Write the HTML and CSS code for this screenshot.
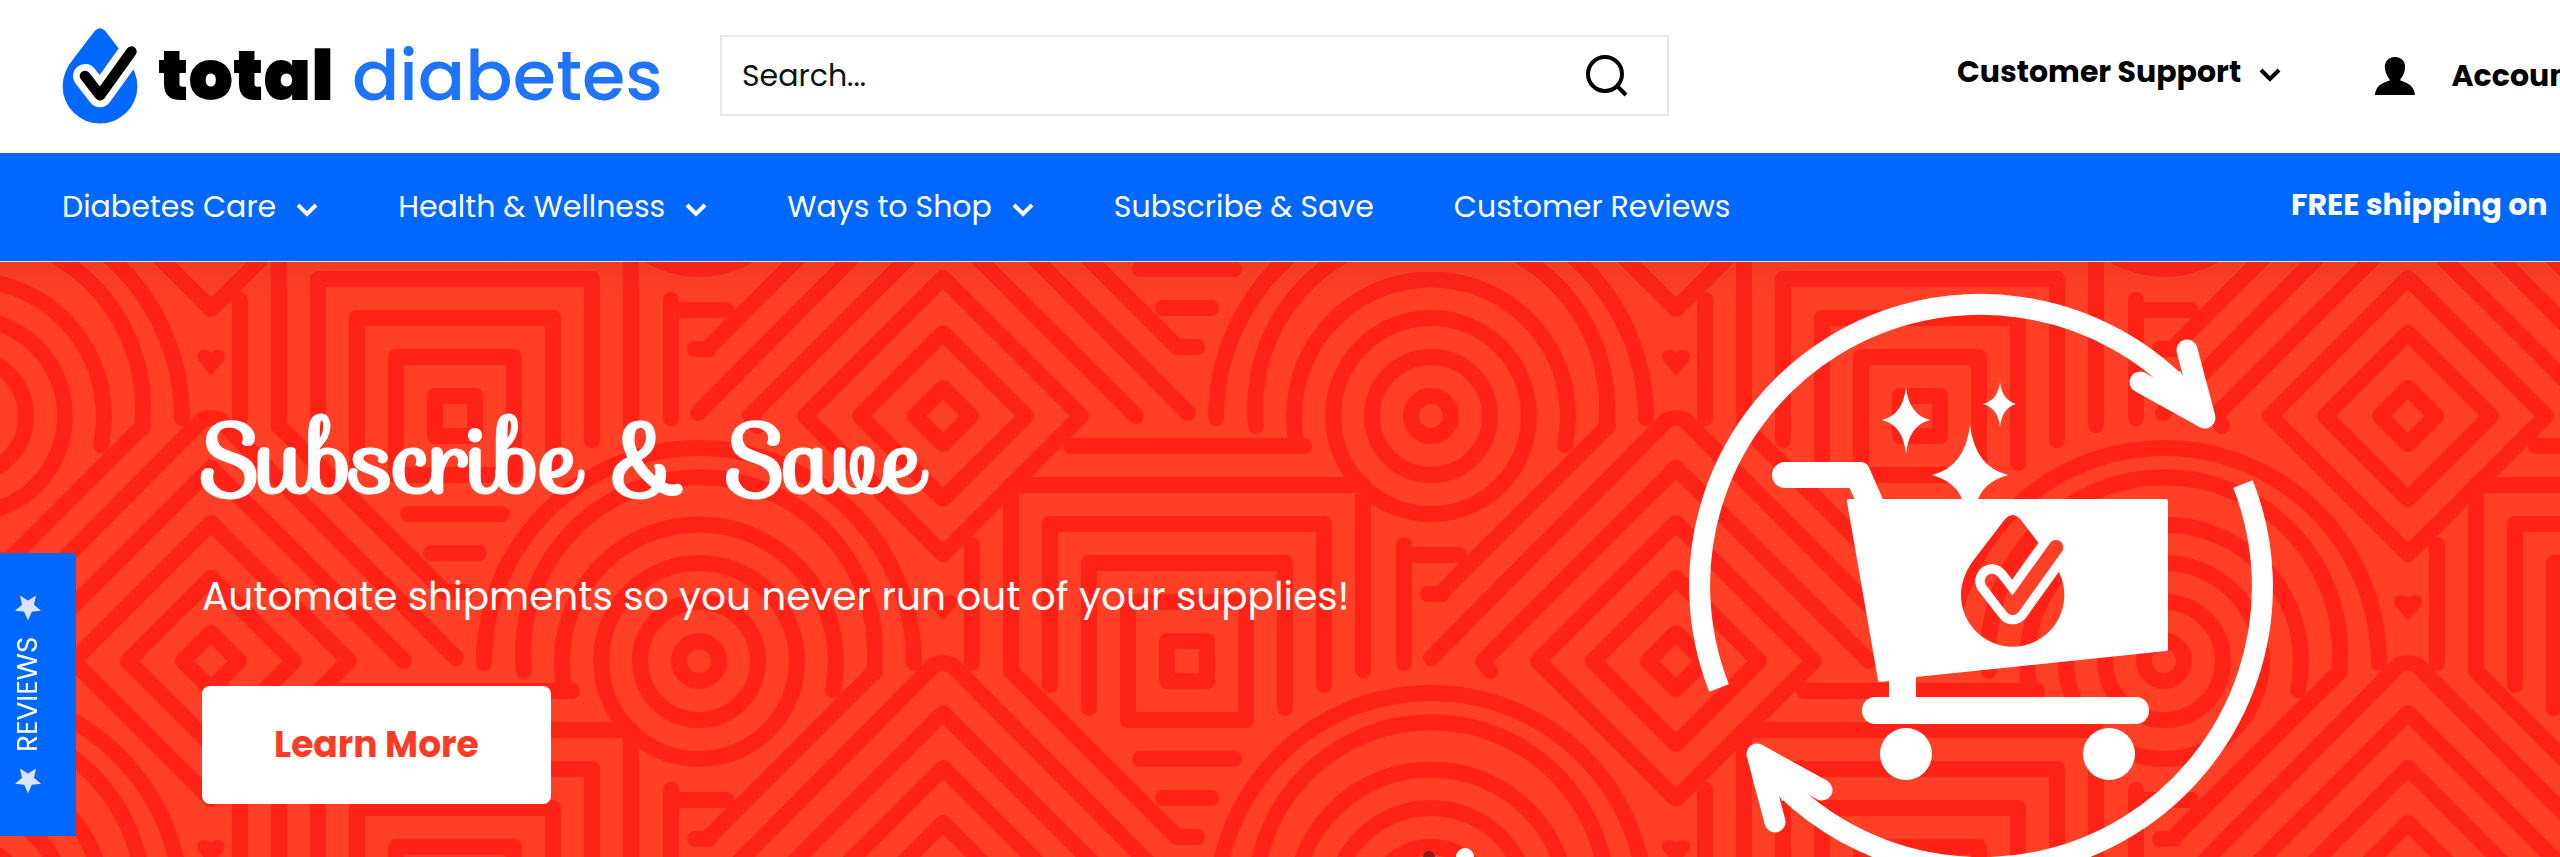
FILE: index.html
```html
<!DOCTYPE html>
<html lang="en">
  <head>
    <meta charset="utf-8">
    <title>Total Diabetes</title>
    <link rel="stylesheet" href="styles.css">
  </head>
  <body>
    <svg class="defs" aria-hidden="true">
      <defs>
        <path id="drop" d="M316 116Q338 94 360 116L444 226Q493 285 493 345A155 155 0 0 1 183 345Q183 285 232 226Z"/>
        <path id="check" d="M276 303L338 383L468 202"/>
        <path id="chevron" d="M2 3L11 12L20 3"/>
        <path id="star" d="M12 0L15.500 8L24 9L17.500 14.500L19.500 23L12 18.500L4.500 23L6.500 14.500L0 9L8.500 8Z"/>
        <!-- diamond, square and circle: one strip of the banner pattern -->
        <g id="strip">
          <path d="M0-28L28 0 0 28-28 0ZM0-83L83 0 0 83-83 0ZM0-138L138 0 0 138-138 0Z"/>
          <path d="M-186 10L-193 0 0-193 193 0M-245-3L-9-241Q0-245 9-241L245-3M-234-69L-68-235M68-235L234-69"/>
          <path d="M-272-116V2M-272-106H-217M-248-67H-234"/>
          <path class="heart" d="M0 203L-12 189Q-15 181-7 180-2 180 0 184 2 180 7 180 15 181 12 189Z"/>
          <g transform="translate(244 -245)">
            <path d="M-20-20H20V20H-20ZM-59-59H59V59H-59ZM-98 47V-98H98V47M-137 24V-137H137V24M-176 10V-176H176V9"/>
            <path d="M-116-215H117M-215-116V2M-47 98H47M-24 137H24M-10 176H10"/>
          </g>
          <g transform="translate(488 0)">
            <circle r="20"/>
            <circle r="59"/>
            <circle r="98"/>
            <path d="M-134 29A137 137 0 1 1 134 29M-175 10A176 176 0 1 1 175 12M-215 2A215 215 0 1 1 215 2"/>
          </g>
        </g>
      </defs>
    </svg>

    <header class="header">
      <a class="logo" href="#">
        <svg class="logo-mark" viewBox="181 104 314 398" aria-hidden="true">
          <use href="#drop" fill="#0068ff"/>
          <use href="#check" class="check-gap"/>
          <use href="#check" class="check-line"/>
        </svg>
        <span class="logo-text"><b>total</b> diabetes</span>
      </a>
      <form class="search">
        <input type="text" placeholder="Search..." aria-label="Search">
        <button type="submit" aria-label="Search">
          <svg viewBox="0 0 44 44" aria-hidden="true"><circle cx="20" cy="20" r="17"/><path d="M32 32L41 41"/></svg>
        </button>
      </form>
      <div class="header-links">
        <a class="support" href="#">Customer Support <svg class="chevron" viewBox="0 0 22 16" aria-hidden="true"><use href="#chevron"/></svg></a>
        <a class="account" href="#">
          <svg viewBox="0 0 40 40" aria-hidden="true"><path d="M20 1C27 1 31 6 30 13C29 19 27 21 25 24C26 26 39 26 40 39H0C1 26 14 26 15 24C13 21 11 19 10 13C9 6 13 1 20 1Z"/></svg>
          Account
        </a>
      </div>
    </header>

    <nav class="nav">
      <a href="#">Diabetes Care <svg class="chevron" viewBox="0 0 22 16" aria-hidden="true"><use href="#chevron"/></svg></a>
      <a href="#">Health &amp; Wellness <svg class="chevron" viewBox="0 0 22 16" aria-hidden="true"><use href="#chevron"/></svg></a>
      <a href="#">Ways to Shop <svg class="chevron" viewBox="0 0 22 16" aria-hidden="true"><use href="#chevron"/></svg></a>
      <a href="#">Subscribe &amp; Save</a>
      <a href="#">Customer Reviews</a>
      <strong class="shipping">FREE shipping on</strong>
    </nav>

    <main class="hero">
      <svg class="pattern" viewBox="0 262 2560 595" preserveAspectRatio="xMinYMin slice" aria-hidden="true">
        <use href="#strip" x="-521" y="416"/>
        <use href="#strip" x="-521" y="906"/>
        <use href="#strip" x="211" y="171"/>
        <use href="#strip" x="211" y="661"/>
        <use href="#strip" x="211" y="1151"/>
        <use href="#strip" x="943" y="416"/>
        <use href="#strip" x="943" y="906"/>
        <use href="#strip" x="1676" y="171"/>
        <use href="#strip" x="1676" y="661"/>
        <use href="#strip" x="1676" y="1151"/>
        <use href="#strip" x="2408" y="416"/>
        <use href="#strip" x="2408" y="906"/>
      </svg>
      <div class="hero-text">
        <h1>Subscribe &amp; Save</h1>
        <p>Automate shipments so you never run out of your supplies!</p>
        <a class="learn" href="#">Learn More</a>
      </div>
      <svg class="cart" viewBox="1680 284 603 603" aria-hidden="true">
        <mask id="cutout" maskUnits="userSpaceOnUse" x="1680" y="284" width="603" height="603">
          <rect x="1680" y="284" width="603" height="603" fill="#fff"/>
          <g transform="translate(1900 480) scale(.3333)">
            <use href="#drop" fill="#000"/>
            <use href="#check" class="check-gap"/>
            <use href="#check" class="check-line"/>
          </g>
        </mask>
        <g id="arrow">
          <path class="ring" d="M1719 688A281 281 0 0 1 2190 398"/>
          <path class="barb" d="M2187 350L2205 418L2140 382"/>
          <path d="M2180 371L2204 417L2160 384Z"/>
        </g>
        <use href="#arrow" transform="rotate(180 1981 586)"/>
        <path class="handle" d="M1785 475H1858L1870 502"/>
        <path d="M1858 462H1862Q1868 463 1870 470L1882 501H1857L1850 485Z"/>
        <path d="M1849 499H2166Q2168 499 2168 502V649Q2168 651 2166 651L1916 677V700H1889V681L1880 682Q1878 682 1878 680L1847 502Q1846 499 1849 499Z" mask="url(#cutout)"/>
        <rect x="1862" y="697" width="287" height="27" rx="13"/>
        <circle cx="1906" cy="754" r="26"/>
        <circle cx="2109" cy="754" r="26"/>
        <path d="M1906 387Q1909 415 1930 420Q1909 425 1906 454Q1903 425 1882 420Q1903 415 1906 387Z"/>
        <path d="M2000 382Q2002 400 2016 404Q2002 408 2000 427Q1998 408 1983 404Q1998 400 2000 382Z"/>
        <path d="M1970 425Q1975 467 2008 475Q1983 482 1977 502H1963Q1957 482 1932 475Q1965 467 1970 425Z"/>
      </svg>
      <div class="dots">
        <button type="button" aria-label="Slide 1"></button>
        <button type="button" class="active" aria-label="Slide 2"></button>
      </div>
    </main>

    <button type="button" class="reviews">
      <svg viewBox="0 0 24 23" aria-hidden="true"><use href="#star"/></svg>
      REVIEWS
      <svg viewBox="0 0 24 23" aria-hidden="true"><use href="#star"/></svg>
    </button>
  </body>
</html>
```
FILE: styles.css
```css
* {
  box-sizing: border-box;
}
body {
  margin: 0;
  height: 100vh;
  display: flex;
  flex-direction: column;
  overflow: hidden;
  font-family: Poppins, Inter, sans-serif;
  font-size: 30px;
  color: #000;
  background: #fff;
}
a {
  color: inherit;
  text-decoration: none;
  white-space: nowrap;
}
button, input {
  font: inherit;
  border: 0;
  padding: 0;
  background: none;
}
.defs {
  position: absolute;
  width: 0;
  height: 0;
}
.chevron {
  width: 22px;
  height: 16px;
  margin-left: 12px;
  vertical-align: -1px;
  fill: none;
  stroke: currentColor;
  stroke-width: 4;
}

/* header */
.header {
  flex: none;
  display: flex;
  align-items: center;
  height: 153px;
  padding: 0 0 2px 62px;
}
.logo {
  flex: none;
  width: 658px;
  display: flex;
  align-items: center;
  gap: 20px;
}
.logo-mark {
  width: 76px;
  height: 96px;
}
.logo-text {
  font-size: 70px;
  font-weight: 500;
  line-height: 80px;
  color: #1f74ff;
}
.logo-text b {
  font-weight: 900;
  color: #000;
}
.check-gap, .check-line {
  fill: none;
  stroke: #fff;
  stroke-width: 100;
  stroke-linecap: round;
  stroke-linejoin: round;
}
.check-line {
  stroke: #000;
  stroke-width: 44;
}
.search {
  flex: 0 0 38%;
  display: flex;
  align-items: center;
  height: 81px;
  padding: 0 38px 0 20px;
  border: 2px solid #e5e7ea;
}
.search input {
  flex: 1;
  height: 76px;
  outline: 0;
}
.search input::placeholder {
  color: #111;
  opacity: 1;
}
.search button {
  width: 44px;
  height: 44px;
}
.search svg {
  display: block;
  fill: none;
  stroke: #000;
  stroke-width: 4;
}
.header-links {
  flex: 0 0 603px;
  min-width: 0;
  display: flex;
  align-items: center;
  gap: 94px;
  margin-left: auto;
  font-weight: 700;
}
.support {
  padding-bottom: 8px;
}
.account {
  display: flex;
  align-items: center;
  gap: 36px;
}
.account svg {
  flex: none;
  width: 40px;
  height: 40px;
}

/* navigation */
.nav {
  flex: none;
  display: flex;
  align-items: center;
  gap: 80px;
  height: 109px;
  padding-left: 62px;
  color: #fff;
  background: #0068ff;
  border-bottom: 1px solid #d8e4f8;
}
.shipping {
  flex: 0 0 269px;
  margin-left: auto;
  padding-bottom: 4px;
  white-space: nowrap;
}

/* banner */
.hero {
  position: relative;
  flex: 1;
  display: flex;
  justify-content: space-between;
  align-items: flex-start;
  padding: 22px 277px 0 202px;
  overflow: hidden;
  color: #fff;
  background: #ff4027;
}
.hero::before {
  content: "";
  position: absolute;
  inset: 0 0 auto;
  height: 40px;
  z-index: 1;
  background: linear-gradient(rgba(200, 40, 30, .2), transparent);
}
.pattern {
  position: absolute;
  top: 0;
  left: 0;
  width: 100%;
  height: 100%;
  fill: none;
  stroke: #ff2217;
  stroke-width: 16;
  stroke-linecap: round;
  stroke-linejoin: round;
}
.heart {
  fill: #ff2217;
  stroke-width: 2;
}
.hero-text {
  position: relative;
  padding-top: 122px;
}
.hero-text h1 {
  margin: 0;
  font-family: Sofia, Pacifico, Lato, cursive;
  font-size: 96px;
  font-weight: 400;
  line-height: 108px;
  -webkit-text-stroke: 3px #fff;
}
.hero-text p {
  margin: 56px 0 62px;
  font-size: 39px;
  line-height: 54px;
}
.learn {
  display: inline-block;
  padding: 0 72px;
  border-radius: 8px;
  font-size: 36px;
  font-weight: 700;
  line-height: 118px;
  color: #ff3b25;
  background: #fff;
}
.cart {
  position: relative;
  flex: none;
  width: 603px;
  height: 603px;
  fill: #fff;
}
.ring, .barb, .handle {
  fill: none;
  stroke: #fff;
  stroke-width: 21;
}
.barb {
  stroke-linecap: round;
  stroke-linejoin: round;
}
.handle {
  stroke-width: 26;
  stroke-linecap: round;
  stroke-linejoin: round;
}
.dots {
  position: absolute;
  left: 1423px;
  bottom: -9px;
  display: flex;
  align-items: center;
  gap: 21px;
}
.dots button {
  width: 12px;
  height: 12px;
  border-radius: 50%;
  background: #8c2018;
}
.dots .active {
  width: 18px;
  height: 18px;
  background: #fff;
}

/* tab fixed to the left edge */
.reviews {
  position: fixed;
  left: 0;
  bottom: 21px;
  width: 76px;
  height: 283px;
  padding-left: 20px;
  display: flex;
  align-items: center;
  justify-content: center;
  gap: 16px;
  writing-mode: vertical-rl;
  transform: rotate(180deg);
  font-size: 28px;
  color: #fff;
  background: #0068ff;
}
.reviews svg {
  width: 26px;
  height: 26px;
  fill: #dbe4f4;
}
```
